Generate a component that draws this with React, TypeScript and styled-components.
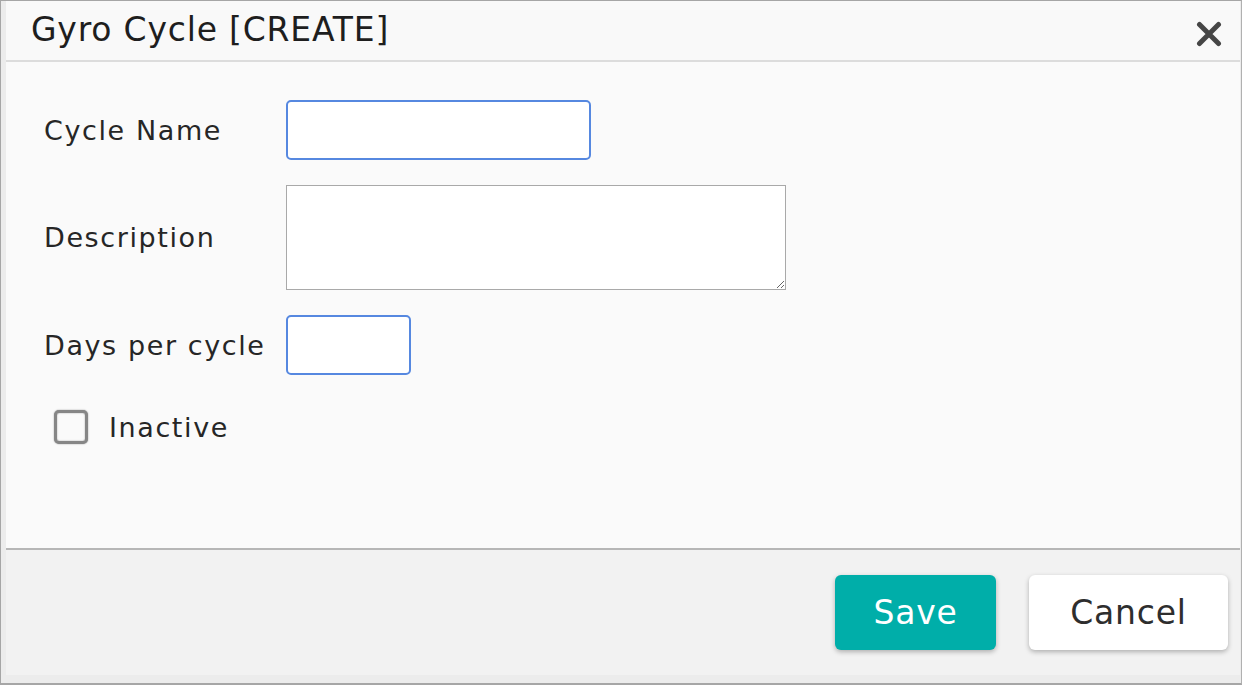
import React from 'react';
import styled, { createGlobalStyle } from 'styled-components';

const GlobalStyle = createGlobalStyle`
  html, body {
    margin: 0;
    padding: 0;
    background: #ececec;
  }
  * {
    box-sizing: border-box;
  }
`;

const fields = [
  { label: 'Cycle Name', kind: 'text', width: 305 },
  { label: 'Description', kind: 'area', width: 500 },
  { label: 'Days per cycle', kind: 'text', width: 125 },
];

const App = () => {
  return (
    <>
      <GlobalStyle />
      <Frame>
        <Header>
          <Title>Gyro Cycle [CREATE]</Title>
          <CloseButton aria-label="close">
            <svg width="26" height="26" viewBox="0 0 26 26">
              <path
                d="M3.5 3.5 L22.5 22.5 M22.5 3.5 L3.5 22.5"
                stroke="#464646"
                strokeWidth="5"
                strokeLinecap="round"
              />
            </svg>
          </CloseButton>
        </Header>
        <Body>
          <Form>
            {fields.map((f) => (
              <Row key={f.label}>
                <Label>{f.label}</Label>
                {f.kind === 'area' ? (
                  <TextArea />
                ) : (
                  <TextInput type="text" $width={f.width} />
                )}
              </Row>
            ))}
            <CheckRow>
              <CheckBox type="checkbox" />
              <CheckText>Inactive</CheckText>
            </CheckRow>
          </Form>
        </Body>
        <Footer>
          <SaveButton>Save</SaveButton>
          <CancelButton>Cancel</CancelButton>
        </Footer>
      </Frame>
    </>
  );
};

export default App;

const font = `"DejaVu Sans", "Open Sans", sans-serif`;

const Frame = styled.div`
  height: 685px;
  width: 1242px;
  border: 1px solid #a6a6a6;
  border-bottom-width: 2px;
  border-right-color: #b0b0b0;
  background: #ececec;
  padding: 0 1px 8px 5px;
  display: flex;
  flex-direction: column;
  font-family: ${font};
  color: #2b2b2b;
`;

const Header = styled.div`
  height: 61px;
  flex-shrink: 0;
  background: #f9f9f9;
  border-bottom: 2px solid #dcdcdc;
  display: flex;
  align-items: center;
  justify-content: space-between;
  padding: 0 18px 0 25px;
`;

const Title = styled.div`
  font-size: 33px;
  color: #1e1e1e;
  margin-top: -3px;
  letter-spacing: 0.8px;
`;

const CloseButton = styled.button`
  border: none;
  background: none;
  padding: 0;
  width: 26px;
  height: 26px;
  margin-top: 7px;
  cursor: pointer;
  filter: blur(0.4px);
`;

const Body = styled.div`
  flex: 1;
  background: #fafafa;
  border-bottom: 2px solid #b6b6b6;
  padding: 38px 0 0 38px;
`;

const Form = styled.div`
  display: flex;
  flex-direction: column;
  gap: 25px;
`;

const Row = styled.div`
  display: grid;
  grid-template-columns: 242px auto;
  align-items: center;
  justify-content: start;
`;

const Label = styled.div`
  font-size: 27px;
  letter-spacing: 1.6px;
  color: #262626;
`;

const TextInput = styled.input<{ $width: number }>`
  width: ${(p) => p.$width}px;
  height: 60px;
  border: 2px solid #5688e0;
  border-radius: 5px;
  background: #fff;
  outline: none;
  font-family: ${font};
  font-size: 22px;
  padding: 0 10px;
`;

const TextArea = styled.textarea`
  width: 500px;
  height: 105px;
  border: 1px solid #a9a9a9;
  background: #fff;
  outline: none;
  font-family: ${font};
  font-size: 22px;
  display: block;
`;

const CheckRow = styled.label`
  display: flex;
  align-items: center;
  gap: 21px;
  margin: 10px 0 0 10px;
  cursor: pointer;
`;

const CheckBox = styled.input`
  appearance: none;
  margin: 0;
  width: 34px;
  height: 34px;
  border: 3px solid #868686;
  border-radius: 5px;
  background: #fafafa;
  box-shadow: 0 0 1.5px #868686, inset 0 0 1.5px #868686;
`;

const CheckText = styled.span`
  font-size: 27px;
  letter-spacing: 1.6px;
  color: #262626;
`;

const Footer = styled.div`
  height: 125px;
  flex-shrink: 0;
  background: #f2f2f2;
  display: flex;
  align-items: center;
  justify-content: flex-end;
  gap: 33px;
  padding-right: 12px;
`;

const BaseButton = styled.button`
  height: 75px;
  border: none;
  border-radius: 6px;
  font-family: ${font};
  font-size: 33px;
  letter-spacing: 0.8px;
  cursor: pointer;
  box-shadow: 0 2px 5px rgba(0, 0, 0, 0.28);
`;

const SaveButton = styled(BaseButton)`
  width: 161px;
  background: #00aea9;
  color: #fff;
`;

const CancelButton = styled(BaseButton)`
  width: 199px;
  background: #fff;
  color: #2e2e2e;
`;
